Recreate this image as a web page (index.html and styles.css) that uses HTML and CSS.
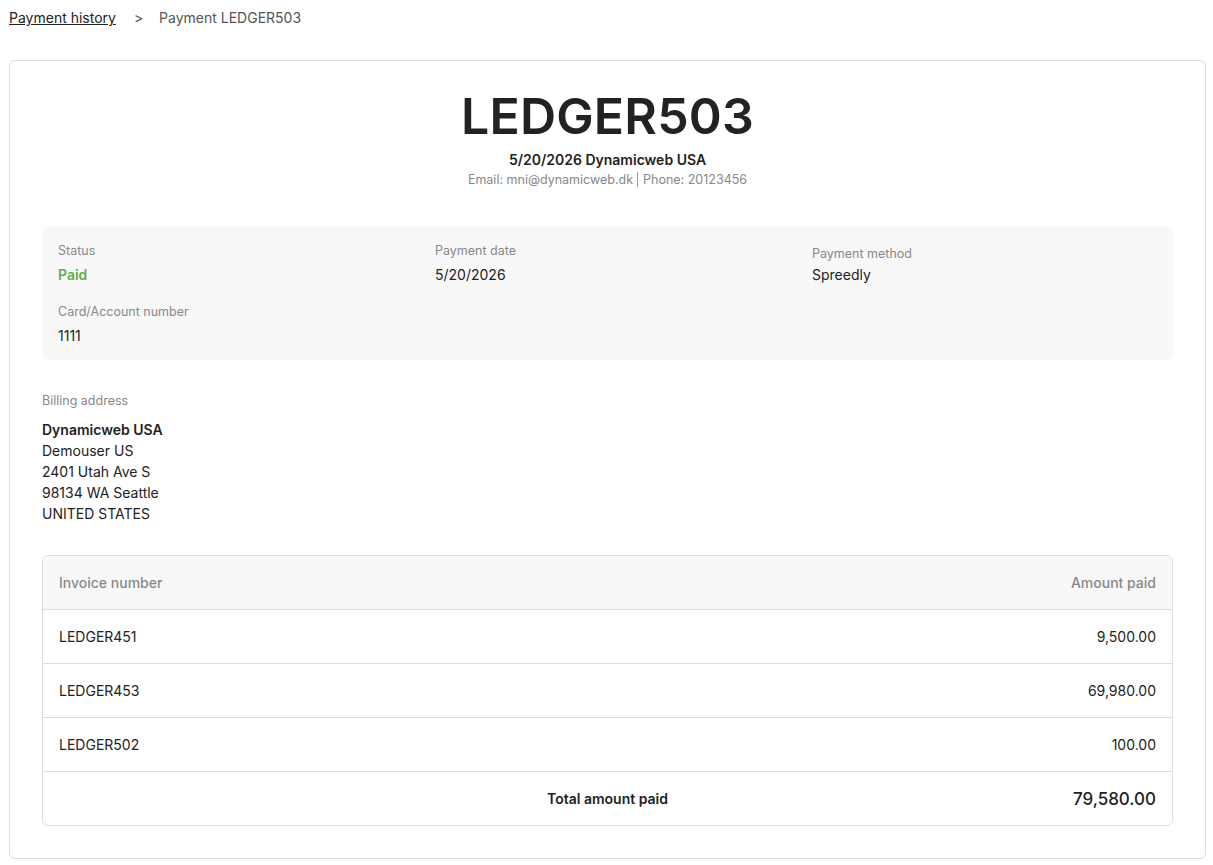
FILE: index.html
```html
<!DOCTYPE html>
<html lang="en">
<head>
    <meta charset="UTF-8">
    <meta name="viewport" content="width=device-width, initial-scale=1.0">
    <title>Payment LEDGER503</title>
    <link rel="stylesheet" href="styles.css">
</head>
<body>
    <nav class="breadcrumb">
        <a href="#">Payment history</a>
        <span class="sep">&gt;</span>
        <span class="current">Payment LEDGER503</span>
    </nav>

    <div class="card">
        <header class="head">
            <h1>LEDGER503</h1>
            <div class="sub">5/20/2026 Dynamicweb USA</div>
            <div class="contact">
                <span>Email: mni@dynamicweb.dk</span><span class="phone">Phone: 20123456</span>
            </div>
        </header>

        <div class="info">
            <div class="field">
                <div class="label">Status</div>
                <div class="value paid">Paid</div>
            </div>
            <div class="field">
                <div class="label">Payment date</div>
                <div class="value">5/20/2026</div>
            </div>
            <div class="field method">
                <div class="label">Payment method</div>
                <div class="value">Spreedly</div>
            </div>
            <div class="field">
                <div class="label">Card/Account number</div>
                <div class="value">1111</div>
            </div>
        </div>

        <div class="address">
            <div class="label">Billing address</div>
            <div class="lines">
                <strong>Dynamicweb USA</strong>
                <span>Demouser US</span>
                <span>2401 Utah Ave S</span>
                <span>98134 WA Seattle</span>
                <span>UNITED STATES</span>
            </div>
        </div>

        <div class="invoices">
            <div class="row th">
                <span>Invoice number</span>
                <span>Amount paid</span>
            </div>
            <div class="row">
                <span>LEDGER451</span>
                <span>9,500.00</span>
            </div>
            <div class="row">
                <span>LEDGER453</span>
                <span>69,980.00</span>
            </div>
            <div class="row">
                <span>LEDGER502</span>
                <span>100.00</span>
            </div>
            <div class="row total">
                <span class="total-label">Total amount paid</span>
                <span class="total-amount">79,580.00</span>
            </div>
        </div>
    </div>
</body>
</html>
```

FILE: styles.css
```css
body {
    font-family: Inter, "Noto Sans", sans-serif;
    color: #222;
    background-color: #fff;
    margin: 0;
    padding: 0 7px 10px 9px;
    font-size: 14px;
}
.breadcrumb {
    height: 60px;
    padding-top: 8px;
    box-sizing: border-box;
    line-height: 20px;
    color: #555;
}
.breadcrumb a {
    color: #222;
    text-decoration: underline;
}
.breadcrumb .sep {
    margin: 0 12px 0 14px;
}
.card {
    border: 1px solid #ddd;
    border-radius: 6px;
    padding: 22px 32px 32px;
}
.head {
    text-align: center;
}
h1 {
    margin: 0;
    font-size: 50px;
    font-weight: 600;
    line-height: 67px;
    letter-spacing: 0.2px;
}
.sub {
    font-weight: 600;
    line-height: 20px;
}
.contact {
    font-size: 12.5px;
    line-height: 20px;
    color: #888;
}
.phone {
    border-left: 1px solid #b48aa8;
    margin-left: 4px;
    padding-left: 5px;
}
.info {
    margin-top: 36px;
    background-color: #f8f8f8;
    border-radius: 6px;
    padding: 16px 16px 14px;
    display: grid;
    grid-template-columns: repeat(3, 1fr);
    column-gap: 32px;
    row-gap: 18px;
}
.label {
    font-size: 12.5px;
    line-height: 18px;
    color: #888;
}
.value {
    margin-top: 4px;
    line-height: 21px;
}
.method .label {
    margin-top: 3px;
}
.method .value {
    margin-top: 1px;
}
.paid {
    color: #5bb04a;
    font-weight: 600;
}
.address {
    margin-top: 32px;
}
.address .lines {
    margin-top: 9px;
    display: flex;
    flex-direction: column;
    line-height: 21px;
}
.address strong {
    font-weight: 600;
}
.invoices {
    margin-top: 31px;
    border: 1px solid #ddd;
    border-radius: 6px;
    overflow: hidden;
}
.row {
    display: flex;
    justify-content: space-between;
    align-items: center;
    box-sizing: border-box;
    height: 54px;
    padding: 0 16px;
    border-top: 1px solid #ddd;
}
.row.th {
    border-top: none;
    height: 53px;
    background-color: #f8f8f8;
    color: #888;
    font-weight: 500;
}
.row.total {
    display: grid;
    grid-template-columns: 1fr auto 1fr;
}
.total-label {
    grid-column: 2;
    font-weight: 600;
}
.total-amount {
    justify-self: end;
    font-size: 17px;
    font-weight: 500;
}
```
